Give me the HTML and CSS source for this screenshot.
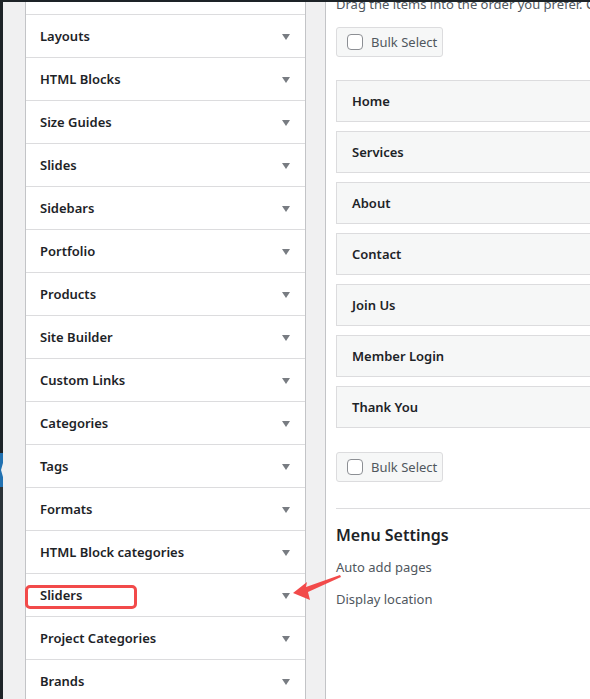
FILE: index.html
```html
<!DOCTYPE html>
<html>
<head>
<meta charset="utf-8">
<link rel="stylesheet" href="styles.css">
</head>
<body>
<div class="topbar"></div>
<div class="page">
  <div class="adminbar">
    <div class="ab-top"></div>
    <div class="ab-current"><span class="ab-notch"></span></div>
    <div class="ab-mid"></div>
    <div class="ab-bottom"></div>
  </div>
  <div class="main">
    <div class="accordion">
      <div class="acc-item acc-partial"></div>
      <div class="acc-item"><span class="acc-title">Layouts</span><span class="caret"></span></div>
      <div class="acc-item"><span class="acc-title">HTML Blocks</span><span class="caret"></span></div>
      <div class="acc-item"><span class="acc-title">Size Guides</span><span class="caret"></span></div>
      <div class="acc-item"><span class="acc-title">Slides</span><span class="caret"></span></div>
      <div class="acc-item"><span class="acc-title">Sidebars</span><span class="caret"></span></div>
      <div class="acc-item"><span class="acc-title">Portfolio</span><span class="caret"></span></div>
      <div class="acc-item"><span class="acc-title">Products</span><span class="caret"></span></div>
      <div class="acc-item"><span class="acc-title">Site Builder</span><span class="caret"></span></div>
      <div class="acc-item"><span class="acc-title">Custom Links</span><span class="caret"></span></div>
      <div class="acc-item"><span class="acc-title">Categories</span><span class="caret"></span></div>
      <div class="acc-item"><span class="acc-title">Tags</span><span class="caret"></span></div>
      <div class="acc-item"><span class="acc-title">Formats</span><span class="caret"></span></div>
      <div class="acc-item"><span class="acc-title">HTML Block categories</span><span class="caret"></span></div>
      <div class="acc-item"><span class="acc-title">Sliders</span><span class="caret"></span></div>
      <div class="acc-item"><span class="acc-title">Project Categories</span><span class="caret"></span></div>
      <div class="acc-item"><span class="acc-title">Brands</span><span class="caret"></span></div>
    </div>
    <div class="editor">
      <p class="hint">Drag the items into the order you prefer. Click</p>
      <div class="bulk"><span class="checkbox"></span><span>Bulk Select</span></div>
      <ul class="menu-list">
        <li class="menu-item">Home</li>
        <li class="menu-item">Services</li>
        <li class="menu-item">About</li>
        <li class="menu-item">Contact</li>
        <li class="menu-item">Join Us</li>
        <li class="menu-item">Member Login</li>
        <li class="menu-item">Thank You</li>
      </ul>
      <div class="bulk bulk-bottom"><span class="checkbox"></span><span>Bulk Select</span></div>
      <div class="settings">
        <h3 class="settings-title">Menu Settings</h3>
        <div class="setting-row">Auto add pages</div>
        <div class="setting-row">Display location</div>
      </div>
    </div>
  </div>
</div>
<div class="mark-box"></div>
<svg class="mark-arrow" width="70" height="50" viewBox="0 0 70 50">
  <polygon points="8,38 22,27 21,32 55,20 56,22 23,37 25,45" fill="#f24a4a"/>
</svg>
</body>
</html>
```

FILE: styles.css
```css
html, body {
  margin: 0;
  padding: 0;
}
body {
  width: 590px;
  height: 699px;
  overflow: hidden;
  background: #f0f0f1;
  font-family: "Noto Sans", "Open Sans", sans-serif;
  font-size: 13px;
  color: #1d2327;
  position: relative;
}
.topbar {
  position: absolute;
  left: 0;
  top: 0;
  width: 590px;
  height: 2px;
  background: #1d2327;
  z-index: 5;
}
.page {
  display: flex;
  height: 699px;
}
.adminbar {
  width: 3px;
  flex: none;
  display: flex;
  flex-direction: column;
}
.ab-top {
  height: 453px;
  background: #1d2327;
}
.ab-current {
  height: 34px;
  background: #2271b1;
  position: relative;
}
.ab-notch {
  position: absolute;
  right: 0;
  top: 10px;
  width: 0;
  height: 0;
  border-top: 7px solid transparent;
  border-bottom: 7px solid transparent;
  border-right: 2px solid #f0f0f1;
}
.ab-mid {
  height: 183px;
  background: #2c3338;
}
.ab-bottom {
  flex: 1;
  background: #1d2327;
}
.main {
  display: flex;
  gap: 19px;
  padding-left: 22px;
  align-items: flex-start;
}
.accordion {
  width: 279px;
  flex: none;
  background: #fff;
  border-left: 1px solid #c3c4c7;
  border-right: 1px solid #c3c4c7;
}
.acc-item {
  height: 42px;
  border-bottom: 1px solid #dcdcde;
  display: flex;
  align-items: center;
  justify-content: space-between;
  padding: 0 15px 0 14px;
}
.acc-partial {
  height: 14px;
}
.acc-title {
  font-weight: 600;
  font-size: 13px;
  color: #1d2327;
}
.caret {
  width: 0;
  height: 0;
  border-left: 4px solid transparent;
  border-right: 4px solid transparent;
  border-top: 6px solid #787c82;
  margin-top: 1px;
}
.editor {
  width: 400px;
  flex: none;
  height: 699px;
  background: #fff;
  border-left: 1px solid #c3c4c7;
  padding: 0 0 0 10px;
  box-sizing: border-box;
  overflow: hidden;
}
.hint {
  margin: -6px 0 0 0;
  line-height: 20px;
  white-space: nowrap;
  color: #50575e;
  font-size: 13px;
}
.bulk {
  margin-top: 13px;
  width: 95px;
  height: 28px;
  box-sizing: content-box;
  border: 1px solid #dcdcde;
  border-radius: 3px;
  background: #f6f7f7;
  display: flex;
  align-items: center;
  gap: 8px;
  padding-left: 10px;
  color: #50575e;
  font-size: 13px;
  white-space: nowrap;
}
.checkbox {
  width: 14px;
  height: 14px;
  flex: none;
  border: 1px solid #8c8f94;
  border-radius: 4px;
  background: #fff;
}
.menu-list {
  list-style: none;
  margin: 23px 0 0 0;
  padding: 0;
  display: flex;
  flex-direction: column;
  gap: 9px;
}
.menu-item {
  height: 40px;
  border: 1px solid #dcdcde;
  background: #f6f7f7;
  display: flex;
  align-items: center;
  padding-left: 15px;
  font-weight: 600;
  font-size: 13px;
  color: #1d2327;
}
.bulk-bottom {
  margin-top: 24px;
}
.settings {
  margin-top: 26px;
  border-top: 1px solid #dcdcde;
}
.settings-title {
  margin: 14px 0 0 0;
  font-size: 16px;
  line-height: 24px;
  font-weight: 600;
  color: #1d2327;
}
.setting-row {
  margin-top: 8px;
  line-height: 24px;
  color: #50575e;
}
.setting-row + .setting-row {
  margin-top: 8px;
}
.mark-box {
  position: absolute;
  left: 25px;
  top: 585px;
  width: 106px;
  height: 18px;
  border: 3px solid #f24a4a;
  border-radius: 5px;
}
.mark-arrow {
  position: absolute;
  left: 285px;
  top: 555px;
}
```
